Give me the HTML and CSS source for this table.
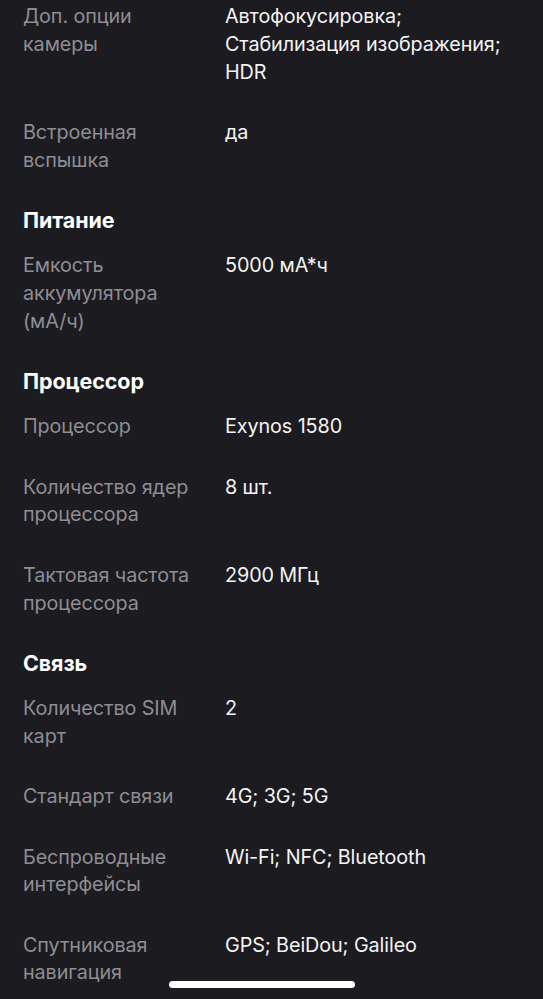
FILE: index.html
```html
<!DOCTYPE html>
<html lang="ru">
<head>
<meta charset="utf-8">
<link rel="stylesheet" href="styles.css">
</head>
<body>
<div class="screen">
  <div class="specs">
    <div class="row"><div class="label">Доп. опции<br>камеры</div><div class="value">Автофокусировка;<br>Стабилизация изображения;<br>HDR</div></div>
    <div class="row"><div class="label">Встроенная<br>вспышка</div><div class="value">да</div></div>

    <h2 class="section">Питание</h2>
    <div class="row"><div class="label">Емкость<br>аккумулятора<br>(мА/ч)</div><div class="value">5000 мА*ч</div></div>

    <h2 class="section">Процессор</h2>
    <div class="row"><div class="label">Процессор</div><div class="value">Exynos 1580</div></div>
    <div class="row"><div class="label">Количество ядер<br>процессора</div><div class="value">8 шт.</div></div>
    <div class="row"><div class="label">Тактовая частота<br>процессора</div><div class="value">2900 МГц</div></div>

    <h2 class="section">Связь</h2>
    <div class="row"><div class="label">Количество SIM<br>карт</div><div class="value">2</div></div>
    <div class="row"><div class="label">Стандарт связи</div><div class="value">4G; 3G; 5G</div></div>
    <div class="row"><div class="label">Беспроводные<br>интерфейсы</div><div class="value">Wi-Fi; NFC; Bluetooth</div></div>
    <div class="row"><div class="label">Спутниковая<br>навигация</div><div class="value">GPS; BeiDou; Galileo</div></div>
  </div>
  <div class="home-indicator"></div>
</div>
</body>
</html>
```
FILE: styles.css
```css
html, body {
  margin: 0;
  padding: 0;
  background: #1c1b20;
}
.screen {
  position: relative;
  width: 543px;
  height: 999px;
  overflow: hidden;
  background: #1c1b20;
  font-family: Inter, "Noto Sans", sans-serif;
  -webkit-font-smoothing: antialiased;
}
.specs {
  padding: 3px 18px 0 23px;
}
.row {
  display: grid;
  grid-template-columns: 202px 1fr;
  padding-bottom: 32.6px;
  font-size: 19.8px;
  line-height: 27.8px;
  letter-spacing: -0.1px;
}
.label {
  color: #8f8e94;
}
.value {
  color: #f4f4f6;
}
.section {
  margin: 0 0 19px 0;
  font-size: 21.5px;
  line-height: 26px;
  font-weight: 700;
  color: #ffffff;
  letter-spacing: -0.1px;
}
.home-indicator {
  position: absolute;
  left: 169px;
  top: 981px;
  width: 186px;
  height: 7px;
  border-radius: 4px;
  background: #ffffff;
}
```
